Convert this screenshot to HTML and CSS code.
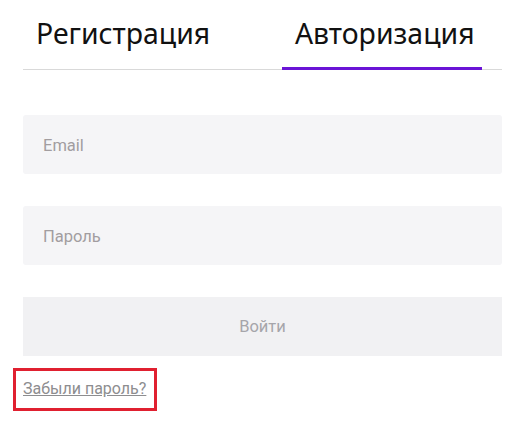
FILE: index.html
```html
<!DOCTYPE html>
<html lang="ru">
<head>
<meta charset="utf-8">
<link rel="stylesheet" href="styles.css">
</head>
<body>
<div class="auth">
  <div class="tabs">
    <div class="tab">Регистрация</div>
    <div class="tab tab-active">Авторизация</div>
  </div>
  <form class="form">
    <div class="field">Email</div>
    <div class="field">Пароль</div>
    <div class="btn">Войти</div>
  </form>
  <div class="forgot"><a class="forgot-link" href="#">Забыли пароль?</a></div>
</div>
</body>
</html>
```

FILE: styles.css
```css
html, body {
  margin: 0;
  padding: 0;
  background: #ffffff;
}
.auth {
  width: 479px;
  margin-left: 23px;
}
.tabs {
  display: flex;
  border-bottom: 1px solid #d9d9d9;
  height: 70px;
  box-sizing: border-box;
}
.tab {
  width: 200px;
  box-sizing: border-box;
  padding: 13px 0 0 13px;
  font-family: "Noto Sans", sans-serif;
  font-size: 28.4px;
  line-height: 40px;
  color: #111111;
}
.tab-active {
  margin-left: 59px;
  border-bottom: 3px solid #6a14d6;
  margin-bottom: -1px;
}
.form {
  margin: 45px 0 0 0;
  display: flex;
  flex-direction: column;
  gap: 32px;
}
.field, .btn {
  height: 59px;
  box-sizing: border-box;
  font-family: Roboto, sans-serif;
  font-size: 16.5px;
  line-height: 62px;
}
.field {
  background: #f5f5f7;
  color: #a29da0;
  padding-left: 20px;
  border-radius: 3px;
}
.btn {
  background: #f1f1f3;
  color: #a6a5aa;
  text-align: center;
  line-height: 60px;
}
.forgot {
  margin: 12px 0 0 -10px;
  width: 144px;
  height: 43px;
  box-sizing: border-box;
  border: 3px solid #e02030;
  padding: 6px 0 0 7px;
}
.forgot-link {
  font-family: Roboto, sans-serif;
  font-size: 16px;
  line-height: 24px;
  color: #8d8d8f;
  text-decoration: underline;
}
```
